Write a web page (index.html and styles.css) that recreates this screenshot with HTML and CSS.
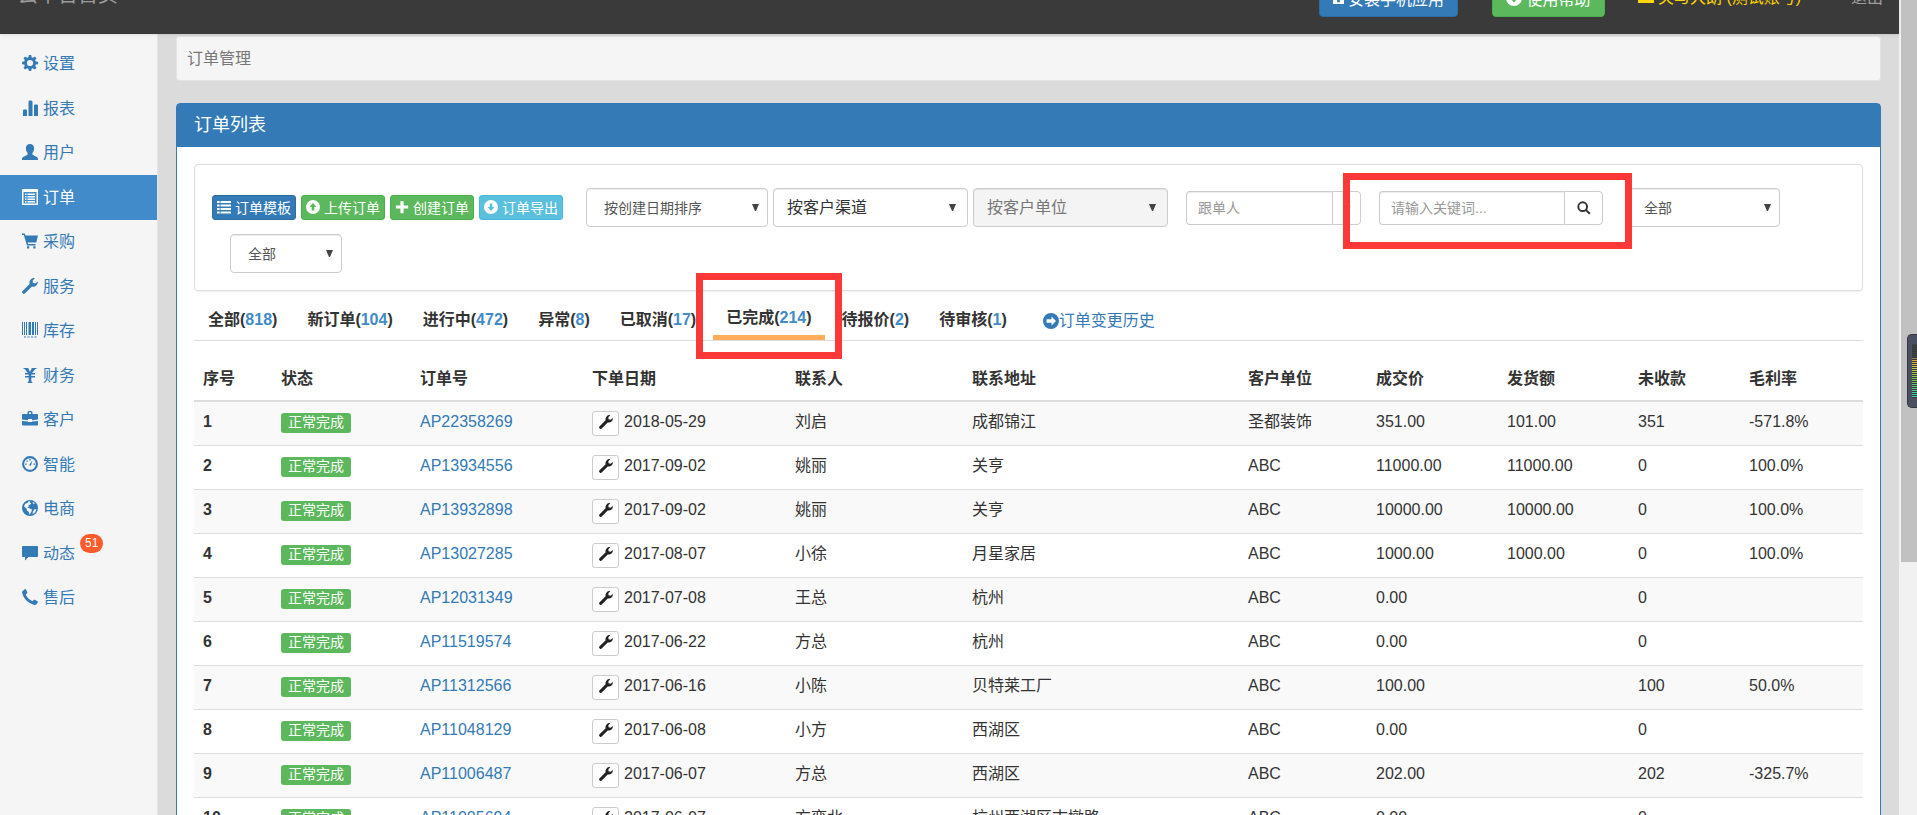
FILE: index.html
```
<!DOCTYPE html>
<html lang="zh-CN">
<head>
  <meta charset="UTF-8">
  <meta name="viewport" content="width=device-width, initial-scale=1.0">
  <title>订单管理</title>
  <link rel="stylesheet" href="styles.css">
</head>
<body>
  <!-- Icon set -->
  <svg class="sprite" aria-hidden="true">
    <symbol id="i-cog" viewBox="0 0 16 16"><path fill-rule="evenodd" d="M6.800 0h2.400l.4 2.200 1.300.6L12.800 1.500l1.700 1.700-1.300 1.900.6 1.300 2.200.4v2.400l-2.200.4-.6 1.300 1.300 1.900-1.700 1.700-1.900-1.300-1.300.6-.4 2.200H6.800l-.4-2.200-1.300-.6-1.900 1.300-1.700-1.700 1.300-1.900-.6-1.300L0 9.200V6.800l2.200-.4.600-1.300-1.300-1.900 1.700-1.700 1.900 1.300 1.300-.6zM8 4.900a3.100 3.100 0 1 0 0 6.200 3.100 3.100 0 0 0 0-6.200z"/></symbol>
    <symbol id="i-stats" viewBox="0 0 16 16"><path d="M1 10.500q0-1 1-1h2q1 0 1 1V16H1zM6.500 2q0-1.500 1-1.500h1.500q1.500 0 1.500 1.500v14h-4zM12 5.500q0-1 1-1h2q1 0 1 1V16h-4z"/></symbol>
    <symbol id="i-user" viewBox="0 0 16 16"><path d="M8 0c2.600 0 4.200 1.700 4.100 4.300 0 2.200-.7 3.600-1.700 4.600v1.700c.4.9 5.600 2 5.600 4.300V16H0v-1.100c0-2.300 5.200-3.400 5.600-4.300V8.900c-1-1-1.700-2.400-1.700-4.600C3.800 1.700 5.400 0 8 0z"/></symbol>
    <symbol id="i-list-alt" viewBox="0 0 16 16"><path fill-rule="evenodd" d="M.5 0h15q.5 0 .5.500v15q0 .5-.5.500H.5Q0 16 0 15.500V.5Q0 0 .5 0zM1.500 3v11.500h13V3zM3 4.500h1.500V6H3zM5.500 4.500H13V6H5.500zM3 7h1.500v1.500H3zM5.500 7H13v1.500H5.500zM3 9.500h1.500V11H3zM5.500 9.500H13V11H5.500zM3 12h1.500v1.500H3zM5.500 12H13v1.500H5.500z"/></symbol>
    <symbol id="i-cart" viewBox="0 0 16 16"><path d="M0 .5h2.700l.8 1.900H16l-1.700 7.200H5.600l.5 1.400h7.400v1.500H5L1.800 2H0zM5 13.300h2.200V15.500H5zM11.300 13.300h2.200V15.500h-2.200z"/></symbol>
    <symbol id="i-wrench" viewBox="0 0 16 16"><path d="M12.900.2a4.600 4.600 0 0 0-5.300 5.700L.4 13.200q-.8.900 0 1.700l.7.700q.8.800 1.700 0L10 8.500A4.600 4.600 0 0 0 15.800 3.400L13.300 5.400 10.900 4.800 10.700 2.500z"/></symbol>
    <symbol id="i-barcode" viewBox="0 0 16 16"><path d="M0 0h1v13H0zM2 0h1v13H2zM4 0h1v13H4zM6.500 0h2.500v13H6.500zM10 0h2v13h-2zM13 0h1v13h-1zM15 0h1v13h-1zM2 14.500h2v1H2zM5.500 14.500h2v1h-2zM9 14.500h2v1H9zM12.500 14.500h2v1h-2z"/></symbol>
    <symbol id="i-yen" viewBox="0 0 16 16"><path d="M1.500 1h4.700L8 4.900 9.800 1h4.700v.9h-1.200L10.200 6H13v1.500H9.300V9H13v1.500H9.300v3.800l1 .9v.8H5.700v-.8l1-.9v-3.800H3V9h3.700V7.500H3V6h2.800L2.700 1.900H1.500z"/></symbol>
    <symbol id="i-briefcase" viewBox="0 0 16 16"><path d="M5.500 3V1.500q0-1.500 1.500-1.500h2q1.500 0 1.500 1.500V3H15q1 0 1 1v4.500l-6 .7V8H6v1.200L0 8.500V4q0-1 1-1zM7 1.200V3h2V1.200zM0 10l6 .5V11h4v-.5l6-.5v3.500q0 1-1 1H1q-1 0-1-1z"/></symbol>
    <symbol id="i-dashboard" viewBox="0 0 16 16"><circle cx="8" cy="8" r="6.900" fill="none" stroke="currentColor" stroke-width="2.100"/><path d="M7.300 8.800 10.500 4.200 9 9.500a1 1 0 0 1-1.700-.7zM7.300 3h1.400v1.500H7.300zM4.500 4.500h1.300v1.300H4.500zM3.200 7.500h1.500v1.200H3.200zM11.500 7.500H13v1.200h-1.500z"/></symbol>
    <symbol id="i-globe" viewBox="0 0 16 16"><path fill-rule="evenodd" d="M8 0a8 8 0 1 0 0 16A8 8 0 0 0 8 0zM8.500 1.300 7.600 2.600l1.700.6L8 4.800 6.500 5l.3 1.700L5.400 7.600l1.900.6L10 9.500 9.300 12 7.500 14.700 6.800 12 5 10.500 4.500 8.500 2 6.500 3.200 3.800 5.500 3 6.300 1.500zM12.300 9.500 14.500 9 13 12.500 10.500 14.200 11 11.500zM10.800 1.900 12.800 3.100 12 4.200 10.600 3z"/></symbol>
    <symbol id="i-comment" viewBox="0 0 16 16"><path d="M1 1h14q1 0 1 1v9q0 1-1 1H6.500L3 15.500V12H1q-1 0-1-1V2q0-1 1-1z"/></symbol>
    <symbol id="i-phone" viewBox="0 0 16 16"><path d="M.4 2.300 3 0q.6-.2 1 .5l1.300 2.800q.2.700-.4 1.200L3.700 5.500c1.300 3 3.700 5.400 6.900 6.800l.9-1.200q.5-.6 1.200-.3l2.800 1.400q.8.400.4 1l-1.700 2.300q-.5.600-1.500.4C6.500 14.800 1.200 9.500.1 3.600q-.1-.8.300-1.300z"/></symbol>
    <symbol id="i-list" viewBox="0 0 16 16"><path d="M0 1h3v2.500H0zM4 1h12v2.500H4zM0 5h3v2.500H0zM4 5h12v2.500H4zM0 9h3v2.500H0zM4 9h12v2.500H4zM0 13h3v2.500H0zM4 13h12v2.500H4z"/></symbol>
    <symbol id="i-up" viewBox="0 0 16 16"><path fill-rule="evenodd" d="M8 0a8 8 0 1 0 0 16A8 8 0 0 0 8 0zM8 3.500l4 4.500H9.500v4h-3V8H4z"/></symbol>
    <symbol id="i-down" viewBox="0 0 16 16"><path fill-rule="evenodd" d="M8 0a8 8 0 1 0 0 16A8 8 0 0 0 8 0zM6.500 4h3v4H12l-4 4.500L4 8h2.500z"/></symbol>
    <symbol id="i-right" viewBox="0 0 16 16"><path fill-rule="evenodd" d="M8 0a8 8 0 1 0 0 16A8 8 0 0 0 8 0zM8.500 3.500 13 8l-4.500 4.500V9.700H3.500V6.300h5z"/></symbol>
    <symbol id="i-plus" viewBox="0 0 16 16"><path d="M6.200 1h3.600v5.200H15v3.600H9.800V15H6.200V9.800H1V6.200h5.200z"/></symbol>
    <symbol id="i-search" viewBox="0 0 16 16"><circle cx="6.500" cy="6.500" r="5" fill="none" stroke="currentColor" stroke-width="2.200"/><path d="M9.600 11.200 11.200 9.600l4.300 4.200-1.700 1.700z"/></symbol>
    <symbol id="i-save" viewBox="0 0 16 16"><path fill-rule="evenodd" d="M0 0h16v16H0zM4 1h8v5H4zM6 10h4v3.500H6z"/></symbol>
    <symbol id="i-card" viewBox="0 0 16 16"><path d="M0 0h16v13H0z"/></symbol>
  </svg>

  <div class="app">
    <header class="navbar">
      <a class="brand" href="#">云平台首页</a>
      <nav class="nav-right">
        <button class="btn btn-primary btn-install" type="button"><svg class="icon-sm"><use href="#i-save"/></svg>安装手机应用</button>
        <button class="btn btn-success btn-help" type="button"><svg class="icon"><use href="#i-down"/></svg>使用帮助</button>
        <a class="account" href="#"><svg class="icon"><use href="#i-card"/></svg>关与大朗 (测试账号)</a>
        <a class="logout" href="#">退出</a>
      </nav>
    </header>

    <div class="body">
      <aside class="sidebar">
        <ul>
          <li><a href="#"><svg class="icon"><use href="#i-cog"/></svg>设置</a></li>
          <li><a href="#"><svg class="icon"><use href="#i-stats"/></svg>报表</a></li>
          <li><a href="#"><svg class="icon"><use href="#i-user"/></svg>用户</a></li>
          <li class="active"><a href="#"><svg class="icon"><use href="#i-list-alt"/></svg>订单</a></li>
          <li><a href="#"><svg class="icon"><use href="#i-cart"/></svg>采购</a></li>
          <li><a href="#"><svg class="icon"><use href="#i-wrench"/></svg>服务</a></li>
          <li><a href="#"><svg class="icon"><use href="#i-barcode"/></svg>库存</a></li>
          <li><a href="#"><svg class="icon"><use href="#i-yen"/></svg>财务</a></li>
          <li><a href="#"><svg class="icon"><use href="#i-briefcase"/></svg>客户</a></li>
          <li><a href="#"><svg class="icon"><use href="#i-dashboard"/></svg>智能</a></li>
          <li><a href="#"><svg class="icon"><use href="#i-globe"/></svg>电商</a></li>
          <li><a href="#"><svg class="icon"><use href="#i-comment"/></svg>动态<span class="count">51</span></a></li>
          <li><a href="#"><svg class="icon"><use href="#i-phone"/></svg>售后</a></li>
        </ul>
      </aside>

      <main class="content">
        <div class="crumb">订单管理</div>

        <section class="panel">
          <h1 class="panel-heading">订单列表</h1>
          <div class="panel-body">
            <form class="filters">
              <button class="btn btn-xs btn-primary" type="button"><svg class="icon-md"><use href="#i-list"/></svg>订单模板</button>
              <button class="btn btn-xs btn-success" type="button"><svg class="icon-md"><use href="#i-up"/></svg> 上传订单</button>
              <button class="btn btn-xs btn-success" type="button"><svg class="icon-md"><use href="#i-plus"/></svg> 创建订单</button>
              <button class="btn btn-xs btn-info" type="button"><svg class="icon-md"><use href="#i-down"/></svg> 订单导出</button>
              <select class="select w-sort" aria-label="排序">
                <option>按创建日期排序</option>
              </select>
              <select class="select select-lg" aria-label="客户渠道">
                <option>按客户渠道</option>
              </select>
              <select class="select select-lg" aria-label="客户单位" disabled>
                <option>按客户单位</option>
              </select>
              <div class="input-group follow">
                <input type="text" placeholder="跟单人" aria-label="跟单人">
                <button type="button" aria-label="选择跟单人"><span class="caret"></span></button>
              </div>
              <div class="input-group search">
                <input type="text" placeholder="请输入关键词..." aria-label="关键词">
                <button type="button" aria-label="搜索"><svg class="icon-md"><use href="#i-search"/></svg></button>
              </div>
              <select class="select w-type" aria-label="类型">
                <option>全部</option>
              </select>
              <select class="select w-all" aria-label="范围">
                <option>全部</option>
              </select>
            </form>

            <nav class="tabs">
              <a href="#">全部(<span>818</span>)</a>
              <a href="#">新订单(<span>104</span>)</a>
              <a href="#">进行中(<span>472</span>)</a>
              <a href="#">异常(<span>8</span>)</a>
              <a href="#">已取消(<span>17</span>)</a>
              <a class="active" href="#">已完成(<span>214</span>)</a>
              <a href="#">待报价(<span>2</span>)</a>
              <a href="#">待审核(<span>1</span>)</a>
              <a class="history" href="#"><svg class="icon"><use href="#i-right"/></svg>订单变更历史</a>
            </nav>

            <table class="orders">
              <thead>
                <tr>
                  <th class="c-no">序号</th>
                  <th class="c-status">状态</th>
                  <th class="c-order">订单号</th>
                  <th class="c-date">下单日期</th>
                  <th class="c-contact">联系人</th>
                  <th>联系地址</th>
                  <th class="c-unit">客户单位</th>
                  <th class="c-price">成交价</th>
                  <th class="c-price">发货额</th>
                  <th class="c-due">未收款</th>
                  <th class="c-rate">毛利率</th>
                </tr>
              </thead>
              <tbody>
                <tr>
                  <th>1</th><td><span class="label">正常完成</span></td><td><a href="#">AP22358269</a></td>
                  <td><div class="date"><button type="button" aria-label="操作"><svg class="icon-md"><use href="#i-wrench"/></svg></button>2018-05-29</div></td>
                  <td>刘启</td><td>成都锦江</td><td>圣都装饰</td><td>351.00</td><td>101.00</td><td>351</td><td>-571.8%</td>
                </tr>
                <tr>
                  <th>2</th><td><span class="label">正常完成</span></td><td><a href="#">AP13934556</a></td>
                  <td><div class="date"><button type="button" aria-label="操作"><svg class="icon-md"><use href="#i-wrench"/></svg></button>2017-09-02</div></td>
                  <td>姚丽</td><td>关亨</td><td>ABC</td><td>11000.00</td><td>11000.00</td><td>0</td><td>100.0%</td>
                </tr>
                <tr>
                  <th>3</th><td><span class="label">正常完成</span></td><td><a href="#">AP13932898</a></td>
                  <td><div class="date"><button type="button" aria-label="操作"><svg class="icon-md"><use href="#i-wrench"/></svg></button>2017-09-02</div></td>
                  <td>姚丽</td><td>关亨</td><td>ABC</td><td>10000.00</td><td>10000.00</td><td>0</td><td>100.0%</td>
                </tr>
                <tr>
                  <th>4</th><td><span class="label">正常完成</span></td><td><a href="#">AP13027285</a></td>
                  <td><div class="date"><button type="button" aria-label="操作"><svg class="icon-md"><use href="#i-wrench"/></svg></button>2017-08-07</div></td>
                  <td>小徐</td><td>月星家居</td><td>ABC</td><td>1000.00</td><td>1000.00</td><td>0</td><td>100.0%</td>
                </tr>
                <tr>
                  <th>5</th><td><span class="label">正常完成</span></td><td><a href="#">AP12031349</a></td>
                  <td><div class="date"><button type="button" aria-label="操作"><svg class="icon-md"><use href="#i-wrench"/></svg></button>2017-07-08</div></td>
                  <td>王总</td><td>杭州</td><td>ABC</td><td>0.00</td><td></td><td>0</td><td></td>
                </tr>
                <tr>
                  <th>6</th><td><span class="label">正常完成</span></td><td><a href="#">AP11519574</a></td>
                  <td><div class="date"><button type="button" aria-label="操作"><svg class="icon-md"><use href="#i-wrench"/></svg></button>2017-06-22</div></td>
                  <td>方总</td><td>杭州</td><td>ABC</td><td>0.00</td><td></td><td>0</td><td></td>
                </tr>
                <tr>
                  <th>7</th><td><span class="label">正常完成</span></td><td><a href="#">AP11312566</a></td>
                  <td><div class="date"><button type="button" aria-label="操作"><svg class="icon-md"><use href="#i-wrench"/></svg></button>2017-06-16</div></td>
                  <td>小陈</td><td>贝特莱工厂</td><td>ABC</td><td>100.00</td><td></td><td>100</td><td>50.0%</td>
                </tr>
                <tr>
                  <th>8</th><td><span class="label">正常完成</span></td><td><a href="#">AP11048129</a></td>
                  <td><div class="date"><button type="button" aria-label="操作"><svg class="icon-md"><use href="#i-wrench"/></svg></button>2017-06-08</div></td>
                  <td>小方</td><td>西湖区</td><td>ABC</td><td>0.00</td><td></td><td>0</td><td></td>
                </tr>
                <tr>
                  <th>9</th><td><span class="label">正常完成</span></td><td><a href="#">AP11006487</a></td>
                  <td><div class="date"><button type="button" aria-label="操作"><svg class="icon-md"><use href="#i-wrench"/></svg></button>2017-06-07</div></td>
                  <td>方总</td><td>西湖区</td><td>ABC</td><td>202.00</td><td></td><td>202</td><td>-325.7%</td>
                </tr>
                <tr>
                  <th>10</th><td><span class="label">正常完成</span></td><td><a href="#">AP11005694</a></td>
                  <td><div class="date"><button type="button" aria-label="操作"><svg class="icon-md"><use href="#i-wrench"/></svg></button>2017-06-07</div></td>
                  <td>方奕北</td><td>杭州西湖区古墩路</td><td>ABC</td><td>0.00</td><td></td><td>0</td><td></td>
                </tr>
              </tbody>
            </table>
          </div>
        </section>
      </main>
    </div>
  </div>

  <div class="scrollbar"><div class="thumb"></div></div>
  <div class="meter"><div class="meter-bars"></div></div>
</body>
</html>
```
FILE: styles.css
```
* {
  box-sizing: border-box;
}

body {
  margin: 0;
  height: 100vh;
  display: flex;
  overflow: hidden;
  background: #dbdbdb;
  color: #333;
  font-family: "Liberation Sans", "Noto Sans CJK SC", sans-serif;
  font-size: 16px;
  line-height: 22px;
}

a {
  color: #337ab7;
  text-decoration: none;
}

button, input, select {
  font-family: inherit;
  margin: 0;
}

button {
  cursor: pointer;
}

.sprite {
  position: absolute;
  width: 0;
  height: 0;
}

.icon, .icon-md, .icon-sm {
  width: 16px;
  height: 16px;
  flex: none;
  fill: currentColor;
}

.icon-md {
  width: 14px;
  height: 14px;
}

.icon-sm {
  width: 11px;
  height: 11px;
}

.app {
  flex: 1;
  min-width: 0;
  display: flex;
  flex-direction: column;
}

/* Top bar, partly scrolled out of view */
.navbar {
  flex: none;
  height: 72px;
  margin-top: -38px;
  padding: 0 16px 0 18px;
  display: flex;
  align-items: center;
  justify-content: space-between;
  background: #3a3a3a;
  box-shadow: 0 1px 3px rgba(0, 0, 0, 0.1);
  position: relative;
}

.brand {
  font-size: 20px;
  color: #9d9d9d;
  padding-bottom: 6px;
}

.nav-right {
  display: flex;
  align-items: center;
}

.btn {
  display: inline-flex;
  align-items: center;
  justify-content: center;
  gap: 4px;
  height: 38px;
  border: 1px solid;
  border-radius: 4px;
  color: #fff;
  font-size: 16px;
  white-space: nowrap;
}

.btn-primary {
  background: #337ab7;
  border-color: #2e6da4;
}

.btn-success {
  background: #5cb85c;
  border-color: #4cae4c;
}

.btn-info {
  background: #5bc0de;
  border-color: #46b8da;
}

.btn-xs {
  height: 25px;
  padding: 0 4px 2px;
  border-radius: 3px;
  font-size: 14px;
}

.btn-install {
  width: 139px;
  margin-right: 34px;
}

.btn-help {
  width: 113px;
  margin-right: 33px;
}

.account {
  display: flex;
  align-items: center;
  gap: 4px;
  min-width: 169px;
  color: #ffd600;
  margin-right: 44px;
}

.logout {
  color: #9d9d9d;
}

.body {
  flex: 1;
  min-height: 0;
  display: flex;
}

/* Sidebar */
.sidebar {
  flex: none;
  width: 158px;
  background: #f5f5f5;
  border-right: 1px solid #e3e3e3;
}

.sidebar ul {
  list-style: none;
  margin: 0;
  padding: 8px 0 0;
}

.sidebar li {
  height: 44px;
}

.sidebar li:nth-child(even) {
  height: 45px;
}

.sidebar a {
  height: 100%;
  padding-left: 22px;
  display: flex;
  align-items: center;
  gap: 5px;
}

.sidebar .icon {
  margin-bottom: 2px;
}

.sidebar .active {
  background: #428bca;
}

.sidebar .active a {
  color: #fff;
}

.count {
  align-self: flex-start;
  padding: 0 5px;
  margin-top: 3px;
  border-radius: 10px;
  background: #ff5a2c;
  color: #fff;
  font-size: 12px;
  line-height: 19px;
}

/* Main column */
.content {
  flex: 1;
  min-width: 0;
  padding: 2px 18px 0;
  overflow: hidden;
}

.crumb {
  height: 45px;
  margin-bottom: 22px;
  padding: 11px 10px;
  background: #f5f5f5;
  border: 1px solid #e3e3e3;
  border-radius: 3px;
  color: #777;
}

.panel {
  background: #fff;
  border: 1px solid #337ab7;
  border-radius: 4px;
}

.panel-heading {
  margin: 0;
  padding: 10px 17px;
  background: #337ab7;
  color: #fff;
  font-size: 18px;
  font-weight: normal;
  line-height: 23px;
}

.panel-body {
  padding: 17px 17px 40px;
}

.filters {
  display: flex;
  flex-wrap: wrap;
  align-items: center;
  gap: 7px 5px;
  padding: 23px 17px 17px;
  border: 1px solid #ddd;
  border-radius: 4px;
  box-shadow: 0 1px 1px rgba(0, 0, 0, 0.05);
}

.select {
  appearance: none;
  height: 39px;
  padding: 0 17px;
  border: 1px solid #ccc;
  border-radius: 4px;
  background: #fff url("data:image/svg+xml,%3Csvg xmlns='http://www.w3.org/2000/svg' width='7' height='7'%3E%3Cpath d='M0 0h7L4 7H3z' fill='%23444'/%3E%3C/svg%3E") no-repeat right 8px center;
  box-shadow: inset 0 1px 1px rgba(0, 0, 0, 0.075);
  color: #555;
  font-size: 14px;
}

.select-lg {
  width: 195px;
  padding: 0 13px;
  background-position: right 11px center;
  color: #333;
  font-size: 16px;
}

.select:disabled {
  background-color: #f4f4f4;
  color: #777;
  opacity: 1;
}

.w-sort {
  width: 182px;
  margin-left: 18px;
}

.w-type {
  width: 154px;
  margin-left: 18px;
}

.w-all {
  width: 112px;
  margin-left: 18px;
}

.input-group {
  display: flex;
  height: 34px;
  margin-left: 13px;
  position: relative;
}

.input-group input {
  flex: 1;
  min-width: 0;
  padding: 0 11px;
  border: 1px solid #ccc;
  border-right: 0;
  border-radius: 4px 0 0 4px;
  box-shadow: inset 0 1px 1px rgba(0, 0, 0, 0.075);
  font-size: 14px;
}

.input-group input::placeholder {
  color: #999;
}

.input-group button {
  width: 39px;
  padding: 0;
  display: flex;
  align-items: center;
  justify-content: center;
  border: 1px solid #ccc;
  border-radius: 0 4px 4px 0;
  background: #fff;
  color: #333;
}

.follow {
  width: 175px;
}

.follow button {
  width: 29px;
}

.caret {
  border: 4px solid transparent;
  border-top-color: #999;
  border-bottom: 0;
}

.search {
  width: 224px;
}

/* Red marker frames */
.search::after,
.tabs .active::after {
  content: "";
  position: absolute;
  border: 7px solid #fd3838;
  pointer-events: none;
  z-index: 1;
}

.search::after {
  inset: -18px -29px -24px -36px;
}

.tabs .active::after {
  inset: -28px -17px -24px -17px;
}

/* Status tabs */
.tabs {
  display: flex;
  gap: 4px;
  height: 40px;
  margin-top: 10px;
  padding-left: 1px;
  border-bottom: 1px solid #ddd;
}

.tabs a {
  padding: 0 13px;
  color: #333;
  font-weight: bold;
  line-height: 38px;
  white-space: nowrap;
}

.tabs span {
  color: #428bca;
}

.tabs .active {
  position: relative;
  border-bottom: 5px solid #ffac59;
  line-height: 34px;
}

.tabs .history {
  display: flex;
  align-items: center;
  padding-left: 19px;
  color: #337ab7;
  font-weight: normal;
}

/* Order table */
.orders {
  width: 100%;
  border-collapse: separate;
  border-spacing: 0;
  table-layout: fixed;
}

.orders th,
.orders td {
  padding: 9px 8px 8px;
  text-align: left;
  vertical-align: top;
  white-space: nowrap;
}

.orders thead th {
  padding: 27px 8px 10px;
  border-bottom: 2px solid #ddd;
}

.orders tbody th,
.orders tbody td {
  height: 44px;
  border-bottom: 1px solid #ddd;
}

.orders tbody tr:nth-child(odd) {
  background: #f9f9f9;
}

.orders th:first-child {
  padding-left: 9px;
}

.c-no { width: 79px; }
.c-status { width: 139px; }
.c-order { width: 172px; }
.c-date { width: 203px; }
.c-contact { width: 177px; }
.c-unit { width: 128px; }
.c-price { width: 131px; }
.c-due { width: 111px; }
.c-rate { width: 122px; }

.label {
  display: block;
  width: 70px;
  height: 20px;
  margin-top: 2px;
  border-radius: 3px;
  background: #5cb85c;
  color: #fff;
  font-size: 14px;
  line-height: 19px;
  text-align: center;
}

.date {
  display: flex;
  gap: 5px;
}

.date button {
  width: 27px;
  height: 25px;
  padding: 0 0 3px;
  display: flex;
  align-items: center;
  justify-content: center;
  border: 1px solid #ccc;
  border-radius: 3px;
  background: #fff;
  color: #222;
}

/* Window scrollbar and the desktop meter at its side */
.scrollbar {
  width: 18px;
  padding-left: 2px;
  background: #f1f1f1;
}

.thumb {
  height: 69%;
  background: #c1c1c1;
}

.meter {
  position: fixed;
  right: 0;
  top: 334px;
  width: 10px;
  height: 74px;
  padding: 9px 0 9px 4px;
  border: 1px solid #33363f;
  border-right: 0;
  border-radius: 5px 0 0 5px;
  background: #4b5060;
}

.meter-bars {
  height: 100%;
  background:
    repeating-linear-gradient(transparent 0 1px, #33363f 1px 2px),
    linear-gradient(#444 0 25%, #e8a33c 28%, #c9c94c 45%, #7fc24c 65%, #3fd0c0 100%);
}
```
